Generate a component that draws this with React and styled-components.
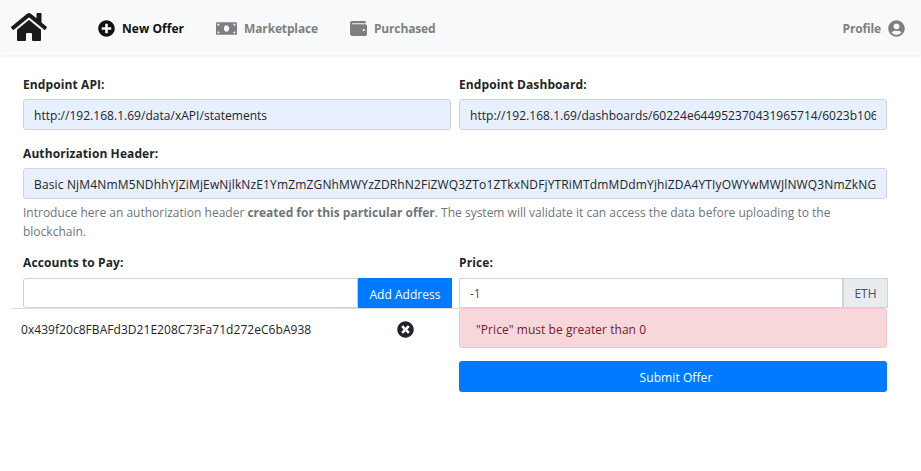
import React from "react";
import styled, { createGlobalStyle } from "styled-components";
import { FaHome, FaPlusCircle, FaMoneyBill, FaWallet, FaUserCircle, FaTimesCircle } from "react-icons/fa";

const Global = createGlobalStyle`
  html, body { margin: 0; padding: 0; background: #fff; }
  body { font-family: "Open Sans", "Noto Sans", sans-serif; font-size: 12px; color: #212529; }
  * { box-sizing: border-box; }
`;
const Page = styled.div`width: 921px; height: 471px; overflow: hidden; background: #fff;`;
const Navbar = styled.nav`
  height: 55px; background: #f8f9fa; box-shadow: 0 1px 3px rgba(0,0,0,.07);
  display: flex; align-items: center; padding: 1px 16px 0 11px;
`;
const Brand = styled.div`display: flex; width: 87px; color: #1a1a1a; margin-top: -3px;`;
const NavItem = styled.div`
  display: flex; align-items: center; gap: 7px; font-weight: 700; font-size: 12px; margin-right: ${p => p.$mr || 0}px;
  color: ${p => p.$active ? "#111" : "#7f7f7f"}; letter-spacing: ${p => p.$active ? "0.05px" : "-0.15px"};
`;
const Spacer = styled.div`flex: 1;`;
const Main = styled.main`
  padding: 20px 34px 0 23px; display: grid; grid-template-columns: 428px 428px; column-gap: 8px;
`;
const Field = styled.div`display: flex; flex-direction: column; grid-column: ${p => p.$wide ? "1 / -1" : "auto"};`;
const Label = styled.label`
  font-weight: 700; font-size: 12px; line-height: 20px; height: ${p => p.$h || 24}px; letter-spacing: 0.1px; color: #212529;
`;
const Input = styled.div`
  height: 31px; background: #e8f0fe; border: 1px solid #ced4da; border-radius: 3px;
  padding: 0 10px; font-size: 12px; line-height: 31px; white-space: nowrap; overflow: hidden;
  letter-spacing: ${p => p.$ls || 0.03}px; color: #212529;
`;
const Clip = styled.div`overflow: hidden; white-space: nowrap;`;
const Help = styled.div`
  color: #6c757d; font-size: 12px; line-height: 19px; margin-top: 4px; margin-bottom: 12px;
  b { font-weight: 700; }
`;
const Group = styled.div`display: flex; height: 30px; margin-right: -1px;`;
const PlainInput = styled.div`
  flex: 1; background: #fff; border: 1px solid #ced4da; border-radius: ${p => p.$right ? "0" : "3px 0 0 3px"};
  padding: 0 10px; font-size: 12px; line-height: 29px; color: #495057;
`;
const AddButton = styled.button`
  width: 94px; border: 0; background: #007bff; color: #fff; font: inherit; font-size: 12px; padding: 2px 0 0; letter-spacing: 0.03px;
`;
const Addon = styled.div`
  width: 45px; background: #e9ecef; border: 1px solid #ced4da; color: #495057; font-size: 12px; padding-top: 1px;
  display: flex; align-items: center; justify-content: center;
`;
const AddressRow = styled.div`
  margin: 0 -8px 0 -12px; border-top: 1px solid #dfdfdf; height: 42px; padding: 0 45px 0 10px;
  display: flex; align-items: center; justify-content: space-between; font-size: 12px; letter-spacing: 0.05px; color: #212529;
`;
const Alert = styled.div`
  height: 40px; background: #f8d7da; border: 1px solid #f5c6cb; border-radius: 3px; color: #721c24;
  display: flex; align-items: center; padding: 2px 16px 0; font-size: 12px; letter-spacing: 0.05px;
`;
const Submit = styled.button`
  margin-top: 13px; height: 31px; border: 0; border-radius: 3px; background: #007bff; color: #fff; font: inherit; font-size: 12px; letter-spacing: 0.08px; padding: 2px 0 0 6px;
`;
const Gap = styled.div`height: ${p => p.$h}px; grid-column: 1 / -1;`;

export default function App() {
  return (
    <Page>
      <Global />
      <Navbar>
        <Brand><FaHome size={36} /></Brand>
        <NavItem $active $mr={32}><FaPlusCircle size={17} />New Offer</NavItem>
        <NavItem $mr={32}><FaMoneyBill size={21} />Marketplace</NavItem>
        <NavItem><FaWallet size={17} />Purchased</NavItem>
        <Spacer />
        <NavItem>Profile<FaUserCircle size={17} /></NavItem>
      </Navbar>
      <Main>
        <Field><Label>Endpoint API:</Label><Input>http://192.168.1.69/data/xAPI/statements</Input></Field>
        <Field><Label>Endpoint Dashboard:</Label><Input><Clip>http://192.168.1.69/dashboards/60224e644952370431965714/6023b106</Clip></Input></Field>
        <Gap $h={14} />
        <Field $wide>
          <Label>Authorization Header:</Label>
          <Input $ls={0.15}><Clip>Basic NjM4NmM5NDhhYjZiMjEwNjlkNzE1YmZmZGNhMWYzZDRhN2FiZWQ3ZTo1ZTkxNDFjYTRiMTdmMDdmYjhiZDA4YTIyOWYwMWJlNWQ3NmZkNGE</Clip></Input>
          <Help>Introduce here an authorization header <b>created for this particular offer</b>. The system will validate it can access the data before uploading to the blockchain.</Help>
        </Field>
        <Field>
          <Label $h={25}>Accounts to Pay:</Label>
          <Group><PlainInput /><AddButton>Add Address</AddButton></Group>
          <AddressRow>0x439f20c8FBAFd3D21E208C73Fa71d272eC6bA938<FaTimesCircle size={17} /></AddressRow>
        </Field>
        <Field>
          <Label $h={25}>Price:</Label>
          <Group><PlainInput $right>-1</PlainInput><Addon>ETH</Addon></Group>
          <Alert>"Price" must be greater than 0</Alert>
          <Submit>Submit Offer</Submit>
        </Field>
      </Main>
    </Page>
  );
}
